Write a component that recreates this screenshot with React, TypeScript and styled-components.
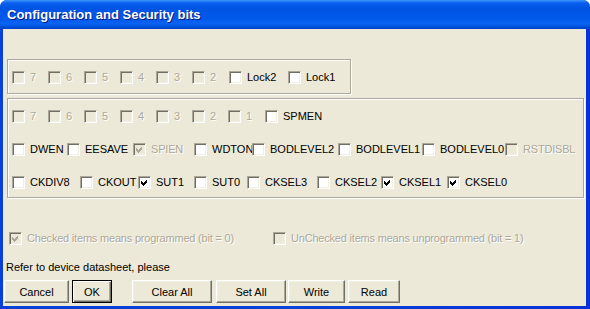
import styled, { createGlobalStyle } from "styled-components";

const GlobalStyle = createGlobalStyle`
  html, body {
    margin: 0;
    padding: 0;
    background: #ffffff;
  }
  body {
    font-family: "Liberation Sans", Arial, sans-serif;
  }
`;

type Bit = {
  label: string;
  width?: number;
  checked?: boolean;
  disabled?: boolean;
};

const lockBits: Bit[] = [
  { label: "7", width: 36, disabled: true },
  { label: "6", width: 36, disabled: true },
  { label: "5", width: 36, disabled: true },
  { label: "4", width: 36, disabled: true },
  { label: "3", width: 36, disabled: true },
  { label: "2", width: 37, disabled: true },
  { label: "Lock2", width: 59 },
  { label: "Lock1", width: 56 },
];

const extBits: Bit[] = [
  { label: "7", width: 36, disabled: true },
  { label: "6", width: 36, disabled: true },
  { label: "5", width: 36, disabled: true },
  { label: "4", width: 36, disabled: true },
  { label: "3", width: 36, disabled: true },
  { label: "2", width: 36, disabled: true },
  { label: "1", width: 37, disabled: true },
  { label: "SPMEN", width: 70 },
];

const highBits: Bit[] = [
  { label: "DWEN", width: 55 },
  { label: "EESAVE", width: 66 },
  { label: "SPIEN", width: 61, checked: true, disabled: true },
  { label: "WDTON", width: 58 },
  { label: "BODLEVEL2", width: 86 },
  { label: "BODLEVEL1", width: 84 },
  { label: "BODLEVEL0", width: 83 },
  { label: "RSTDISBL", width: 74, disabled: true },
];

const lowBits: Bit[] = [
  { label: "CKDIV8", width: 68 },
  { label: "CKOUT", width: 58 },
  { label: "SUT1", width: 56, checked: true },
  { label: "SUT0", width: 53 },
  { label: "CKSEL3", width: 70 },
  { label: "CKSEL2", width: 64 },
  { label: "CKSEL1", width: 66, checked: true },
  { label: "CKSEL0", width: 66, checked: true },
];

const buttons = [
  { label: "Cancel", width: 65, ml: 1 },
  { label: "OK", width: 40, ml: 3, primary: true },
  { label: "Clear All", width: 80, ml: 20 },
  { label: "Set All", width: 70, ml: 4 },
  { label: "Write", width: 57, ml: 2 },
  { label: "Read", width: 52, ml: 3 },
];

function CheckBox({ label, width, checked, disabled }: Bit) {
  return (
    <Item $width={width}>
      <Box $disabled={disabled}>
        {checked ? (
          <svg width="11" height="11" viewBox="0 0 11 11" shapeRendering="crispEdges">
            <path
              d="M2 4 L4 6 L8 2 L8 5 L4 9 L2 7 Z"
              fill={disabled ? "#aca899" : "#000000"}
            />
          </svg>
        ) : null}
      </Box>
      <Label $disabled={disabled}>{label}</Label>
    </Item>
  );
}

export default function App() {
  return (
    <>
      <GlobalStyle />
      <Window>
        <TitleBar>Configuration and Security bits</TitleBar>
        <Client>
          <LockGroup>
            <Row>
              {lockBits.map((b, i) => (
                <CheckBox key={i} {...b} />
              ))}
            </Row>
          </LockGroup>
          <FuseGroup>
            <Row>
              {extBits.map((b, i) => (
                <CheckBox key={i} {...b} />
              ))}
            </Row>
            <Row>
              {highBits.map((b, i) => (
                <CheckBox key={i} {...b} />
              ))}
            </Row>
            <Row>
              {lowBits.map((b, i) => (
                <CheckBox key={i} {...b} />
              ))}
            </Row>
          </FuseGroup>
          <LegendRow>
            <CheckBox
              label="Checked items means programmed (bit = 0)"
              width={264}
              checked
              disabled
            />
            <CheckBox
              label="UnChecked items means unprogrammed (bit = 1)"
              width={290}
              disabled
            />
          </LegendRow>
          <Note>Refer to device datasheet, please</Note>
          <ButtonBar>
            {buttons.map((b) => (
              <Button
                key={b.label}
                $width={b.width}
                $ml={b.ml}
                $primary={b.primary}
              >
                {b.label}
              </Button>
            ))}
          </ButtonBar>
        </Client>
      </Window>
    </>
  );
}

const Window = styled.div`
  width: 590px;
  height: 309px;
  display: flex;
  flex-direction: column;
  border-radius: 7px 7px 0 0;
  overflow: hidden;
  background: linear-gradient(to right, #0a3fd8 0%, #0842d6 50%, #0831d9 100%);
`;

const TitleBar = styled.div`
  flex: none;
  height: 29px;
  display: flex;
  align-items: center;
  padding: 0 0 1px 7px;
  box-sizing: border-box;
  color: #ffffff;
  font-family: "Liberation Sans", Arial, sans-serif;
  font-weight: bold;
  font-size: 13px;
  text-shadow: 1px 1px 0 #0a1883;
  background: linear-gradient(
    to bottom,
    #3d95ff 0px,
    #0a5fef 3px,
    #0054e3 8px,
    #0058ea 18px,
    #0a63f2 24px,
    #0050d8 27px,
    #003fc4 29px
  );
`;

const Client = styled.div`
  flex: 1;
  margin: 0 4px 3px 3px;
  background: #ece9d8;
  display: flex;
  flex-direction: column;
`;

const Group = styled.div`
  box-sizing: border-box;
  margin-left: 4px;
  padding: 11px 0 0 4px;
  border: 1px solid #aca899;
  box-shadow: inset 1px 1px 0 #ffffff, 1px 1px 0 #ffffff;
`;

const LockGroup = styled(Group)`
  margin-top: 30px;
  width: 344px;
  height: 35px;
`;

const FuseGroup = styled(Group)`
  margin-top: 4px;
  width: 577px;
  height: 100px;
  display: flex;
  flex-direction: column;
  gap: 20px;
`;

const Row = styled.div`
  display: flex;
  align-items: center;
  height: 13px;
`;

const Item = styled.div<{ $width?: number }>`
  display: flex;
  align-items: center;
  flex: none;
  width: ${(p) => (p.$width ? `${p.$width}px` : "auto")};
  height: 13px;
  overflow: hidden;
`;

const Box = styled.span<{ $disabled?: boolean }>`
  flex: none;
  box-sizing: border-box;
  width: 13px;
  height: 13px;
  display: flex;
  align-items: center;
  justify-content: center;
  border: 1px solid;
  border-color: #aca899 #ffffff #ffffff #aca899;
  box-shadow: inset 1px 1px 0 #716f64, inset -1px -1px 0 #f1efe2;
  background: ${(p) => (p.$disabled ? "#ece9d8" : "#ffffff")};
`;

const Label = styled.span<{ $disabled?: boolean }>`
  margin-left: 5px;
  font-size: 11px;
  line-height: 13px;
  white-space: nowrap;
  letter-spacing: ${(p) => (p.$disabled ? "-0.2px" : "0")};
  color: ${(p) => (p.$disabled ? "#aca899" : "#000000")};
  text-shadow: ${(p) => (p.$disabled ? "1px 1px 0 #ffffff" : "none")};
`;

const LegendRow = styled.div`
  display: flex;
  align-items: center;
  margin: 34px 0 0 6px;
`;

const Note = styled.div`
  margin: 16px 0 0 3px;
  font-size: 11px;
  line-height: 13px;
  color: #000000;
`;

const ButtonBar = styled.div`
  display: flex;
  margin-top: 6px;
`;

const Button = styled.button<{ $width: number; $ml: number; $primary?: boolean }>`
  box-sizing: border-box;
  width: ${(p) => p.$width}px;
  height: 23px;
  margin-left: ${(p) => p.$ml}px;
  padding: 0;
  font-family: "Liberation Sans", Arial, sans-serif;
  font-size: 11px;
  color: #000000;
  background: #ece9d8;
  border: 1px solid;
  border-color: ${(p) =>
    p.$primary ? "#000000" : "#ffffff #716f64 #716f64 #ffffff"};
  box-shadow: ${(p) =>
    p.$primary
      ? "inset 1px 1px 0 #ffffff, inset -1px -1px 0 #716f64, inset -2px -2px 0 #aca899"
      : "inset -1px -1px 0 #aca899, inset 1px 1px 0 #f1efe2"};
  border-radius: 0;
`;
